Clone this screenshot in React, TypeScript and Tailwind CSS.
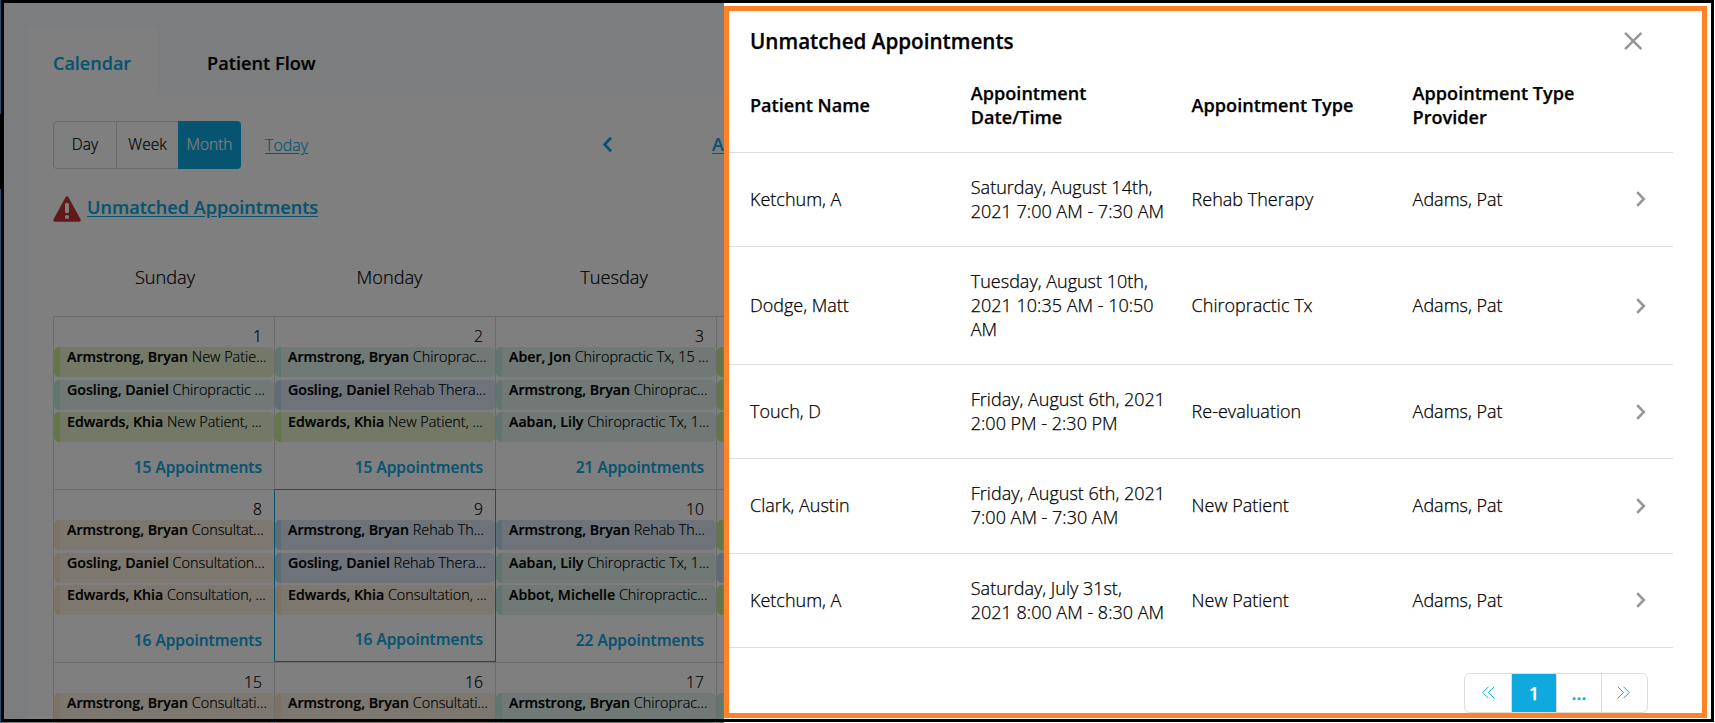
type Tone = "green" | "teal" | "blue" | "sand";

type CalendarEvent = { tone: Tone; name?: string; detail?: string };

type Day = { day?: number; events: CalendarEvent[]; total?: string; today?: boolean };

const tones: Record<Tone, string> = {
  green: "bg-[#e8f3cf] border-[#c8ea90]",
  teal: "bg-[#e0f3ed] border-[#c1eee1]",
  blue: "bg-[#dce7f5] border-[#badaf0]",
  sand: "bg-[#f9f0df] border-[#fbe7c8]",
};

const ev = (tone: Tone, name?: string, detail?: string): CalendarEvent => ({ tone, name, detail });

const weeks: Day[][] = [
  [
    {
      day: 1,
      events: [
        ev("green", "Armstrong, Bryan", "New Patie..."),
        ev("teal", "Gosling, Daniel", "Chiropractic ..."),
        ev("green", "Edwards, Khia", "New Patient, ..."),
      ],
      total: "15 Appointments",
    },
    {
      day: 2,
      events: [
        ev("teal", "Armstrong, Bryan", "Chiroprac..."),
        ev("blue", "Gosling, Daniel", "Rehab Thera..."),
        ev("green", "Edwards, Khia", "New Patient, ..."),
      ],
      total: "15 Appointments",
    },
    {
      day: 3,
      events: [
        ev("teal", "Aber, Jon", "Chiropractic Tx, 15 ..."),
        ev("teal", "Armstrong, Bryan", "Chiroprac..."),
        ev("teal", "Aaban, Lily", "Chiropractic Tx, 1..."),
      ],
      total: "21 Appointments",
    },
    { events: [ev("green"), ev("green"), ev("green")] },
  ],
  [
    {
      day: 8,
      events: [
        ev("sand", "Armstrong, Bryan", "Consultat..."),
        ev("sand", "Gosling, Daniel", "Consultation..."),
        ev("sand", "Edwards, Khia", "Consultation, ..."),
      ],
      total: "16 Appointments",
    },
    {
      day: 9,
      today: true,
      events: [
        ev("blue", "Armstrong, Bryan", "Rehab Th..."),
        ev("blue", "Gosling, Daniel", "Rehab Thera..."),
        ev("sand", "Edwards, Khia", "Consultation, ..."),
      ],
      total: "16 Appointments",
    },
    {
      day: 10,
      events: [
        ev("blue", "Armstrong, Bryan", "Rehab Th..."),
        ev("teal", "Aaban, Lily", "Chiropractic Tx, 1..."),
        ev("teal", "Abbot, Michelle", "Chiropractic..."),
      ],
      total: "22 Appointments",
    },
    { events: [ev("green"), ev("blue"), ev("green")] },
  ],
  [
    { day: 15, events: [ev("sand", "Armstrong, Bryan", "Consultati...")] },
    { day: 16, events: [ev("sand", "Armstrong, Bryan", "Consultati...")] },
    { day: 17, events: [ev("teal", "Armstrong, Bryan", "Chiroprac...")] },
    { events: [ev("teal")] },
  ],
];

const appointments = [
  { name: "Ketchum, A", when: ["Saturday, August 14th,", "2021 7:00 AM - 7:30 AM"], type: "Rehab Therapy" },
  { name: "Dodge, Matt", when: ["Tuesday, August 10th,", "2021 10:35 AM - 10:50", "AM"], type: "Chiropractic Tx" },
  { name: "Touch, D", when: ["Friday, August 6th, 2021", "2:00 PM - 2:30 PM"], type: "Re-evaluation" },
  { name: "Clark, Austin", when: ["Friday, August 6th, 2021", "7:00 AM - 7:30 AM"], type: "New Patient" },
  { name: "Ketchum, A", when: ["Saturday, July 31st,", "2021 8:00 AM - 8:30 AM"], type: "New Patient" },
];

function EventPill({ event }: { event: CalendarEvent }) {
  return (
    <div
      className={`h-[30px] overflow-hidden rounded-[5px] border-l-[6px] pl-[7px] text-[14.2px] leading-[20px] whitespace-nowrap ${tones[event.tone]}`}
    >
      <span className="font-semibold">{event.name}</span>{" "}
      <span className="text-[14.4px] font-light">{event.detail}</span>
    </div>
  );
}

function DayCell({ day }: { day: Day }) {
  return (
    <div className="relative h-[173px] border-t border-l border-[#d9d9d9]">
      <div className="h-[30px] pt-[8px] pr-[12px] text-right text-[15.7px] leading-[22px] font-light">{day.day}</div>
      <div className="flex flex-col gap-[2.5px]">
        {day.events.map((event, i) => (
          <EventPill key={i} event={event} />
        ))}
      </div>
      {day.total && (
        <div
          className={`pr-[12px] text-right text-[15.5px] leading-[22px] font-semibold text-[#0da9df] ${day.today ? "pt-[13px]" : "pt-[14px]"}`}
        >
          {day.total}
        </div>
      )}
      {day.today && <div className="absolute -top-px -left-px z-10 h-[173px] w-[222px] border border-[#0da9df]" />}
    </div>
  );
}

function Calendar() {
  return (
    <div className="flex h-[723px] w-[724px] flex-col overflow-hidden bg-[#f9fafd] pl-[28px] [-webkit-text-stroke:0.2px]">
      <div className="flex h-[95px] shrink-0 items-end text-[18px] leading-[24px] font-semibold">
        <div className="flex h-[69px] w-[129px] items-center rounded-t-[4px] bg-white pt-[5px] pl-[25px] text-[#0da9df]">
          Calendar
        </div>
        <div className="flex h-[69px] items-center pt-[5px] pl-[50px] text-[18.2px]">Patient Flow</div>
      </div>
      <div className="flex-1 bg-white pl-[25px]">
        <div className="flex h-[74px] items-end text-[15.5px]">
          <div className="flex h-[48px] w-[188px] shrink-0 rounded-[4px] border border-[#d2d2d2] font-light">
            <div className="flex w-[62px] items-center justify-center">Day</div>
            <div className="flex w-[62px] items-center justify-center border-l border-[#d2d2d2]">Week</div>
            <div className="-my-px -mr-px flex w-[63px] items-center justify-center rounded-r-[4px] bg-[#0da9df] text-white">
              Month
            </div>
          </div>
          <div className="ml-[24px] flex h-[48px] w-[336px] shrink-0 items-center">
            <a className="text-[16px] font-light text-[#0da9df] underline underline-offset-2">Today</a>
          </div>
          <svg
            className="mb-[16px] h-[17px] w-[11px] shrink-0"
            viewBox="0 0 11 17"
            fill="none"
            stroke="#0da9df"
            strokeWidth="2.8"
          >
            <path d="M10 1.8 3.6 8.5 10 15.2" />
          </svg>
          <a className="ml-[100px] flex h-[48px] shrink-0 items-center pb-[2px] text-[18px] font-semibold text-[#0da9df] underline underline-offset-2">
            A
          </a>
        </div>
        <div className="flex h-[79px] items-start pt-[26px]">
          <svg className="mt-[1px] h-[26px] w-[28px]" viewBox="0 0 28 26">
            <path d="M14 2 26 24H2z" fill="#c33232" stroke="#c33232" strokeWidth="3.4" strokeLinejoin="round" />
            <path d="M14 8.7v6.6" stroke="#fff" strokeWidth="4" strokeLinecap="round" />
            <circle cx="14" cy="21" r="2.1" fill="#fff" />
          </svg>
          <a className="ml-[6px] text-[18.1px] leading-[24px] font-semibold text-[#0da9df] underline underline-offset-2">
            Unmatched Appointments
          </a>
        </div>
        <div className="flex h-[68px] text-[18.2px] leading-[24px] font-light">
          <div className="w-[224px] shrink-0 pt-[17px] text-center">Sunday</div>
          <div className="w-[225px] shrink-0 pt-[17px] text-center">Monday</div>
          <div className="w-[224px] shrink-0 pt-[17px] text-center">Tuesday</div>
        </div>
        <div className="grid w-[884px] grid-cols-4">
          {weeks.flat().map((day, i) => (
            <DayCell key={i} day={day} />
          ))}
        </div>
      </div>
    </div>
  );
}

function Chevron() {
  return (
    <svg className="mt-[1px] h-[16px] w-[10px]" viewBox="0 0 10 16" fill="none" stroke="#969696" strokeWidth="2.6">
      <path d="M1.2 1.2 7.8 8l-6.6 6.8" />
    </svg>
  );
}

const columns = "grid grid-cols-[220.8px_220.8px_221px_223.4px_1fr] items-center pl-[26px]";

function UnmatchedPanel() {
  return (
    <div className="flex h-[723px] w-[991px] flex-col bg-white text-[18.1px] leading-[24px] [-webkit-text-stroke:0.25px]">
      <div className="flex h-[68px] shrink-0 items-center justify-between pt-[13px] pr-[73px] pl-[26px]">
        <h2 className="text-[20.65px] font-semibold">Unmatched Appointments</h2>
        <svg
          className="h-[18px] w-[18px]"
          viewBox="0 0 18 18"
          fill="none"
          stroke="#969696"
          strokeWidth="2.6"
          strokeLinecap="round"
        >
          <path d="m1.8 1.6 14.8 14.8M16.6 1.6 1.8 16.4" />
        </svg>
      </div>
      <div className="w-[949px]">
        <div className={`${columns} h-[84.1px] pb-[10px] font-semibold`}>
          <div>Patient Name</div>
          <div>
            Appointment
            <br />
            Date/Time
          </div>
          <div>Appointment Type</div>
          <div>
            Appointment Type
            <br />
            Provider
          </div>
        </div>
        {appointments.map((row, i) => (
          <div
            key={i}
            className={`${columns} border-t border-[#dedede] pb-[1.5px] text-[18px] font-light ${row.when.length === 3 ? "h-[118px]" : "h-[94.2px]"}`}
          >
            <div>{row.name}</div>
            <div className="whitespace-nowrap">
              {row.when.map((line) => (
                <div key={line}>{line}</div>
              ))}
            </div>
            <div>{row.type}</div>
            <div>Adams, Pat</div>
            <Chevron />
          </div>
        ))}
        <div className="flex h-[66px] items-end justify-end border-t border-[#dedede] pr-[25px]">
          <div className="grid h-[40px] w-[184px] grid-cols-[46px_46px_44px_46px] overflow-hidden rounded-[6px] border border-[#dedede] text-[#0da9df]">
            <div className="flex items-center justify-center">
              <svg className="h-[13px] w-[13px]" viewBox="0 0 13 13" fill="none" stroke="#0da9df" strokeWidth="1">
                <path d="M6.5.7.8 6.5l5.7 5.8M12.2.7 6.5 6.5l5.7 5.8" />
              </svg>
            </div>
            <div className="flex items-center justify-center border-x border-[#dedede] bg-[#0da9df] font-semibold text-white">
              1
            </div>
            <div className="flex items-center justify-center font-semibold">...</div>
            <div className="flex items-center border-l border-[#dedede] pl-[15px]">
              <svg className="h-[13px] w-[13px]" viewBox="0 0 13 13" fill="none" stroke="#0da9df" strokeWidth="1">
                <path d="m.8.7 5.7 5.8-5.7 5.8M6.5.7l5.7 5.8-5.7 5.8" />
              </svg>
            </div>
          </div>
        </div>
      </div>
    </div>
  );
}

export default function App() {
  return (
    <div className="relative flex h-[723px] w-[1715px] overflow-hidden bg-white font-['Open_Sans',sans-serif] text-black">
      <div className="relative">
        <Calendar />
        <div className="absolute inset-0 z-20 bg-black/50" />
      </div>
      <UnmatchedPanel />
      <div className="absolute top-[6px] left-[724px] z-30 h-[712px] w-[983px] border-[5px] border-[#ff8228]" />
      <div className="absolute top-0 left-[1px] z-30 h-[722px] w-[1713px] border-[3px] border-black" />
      <div className="absolute top-0 left-0 z-30 flex h-full w-px flex-col bg-[#2f4a70]">
        <div className="mt-[114px] h-[75px] bg-black" />
      </div>
    </div>
  );
}
